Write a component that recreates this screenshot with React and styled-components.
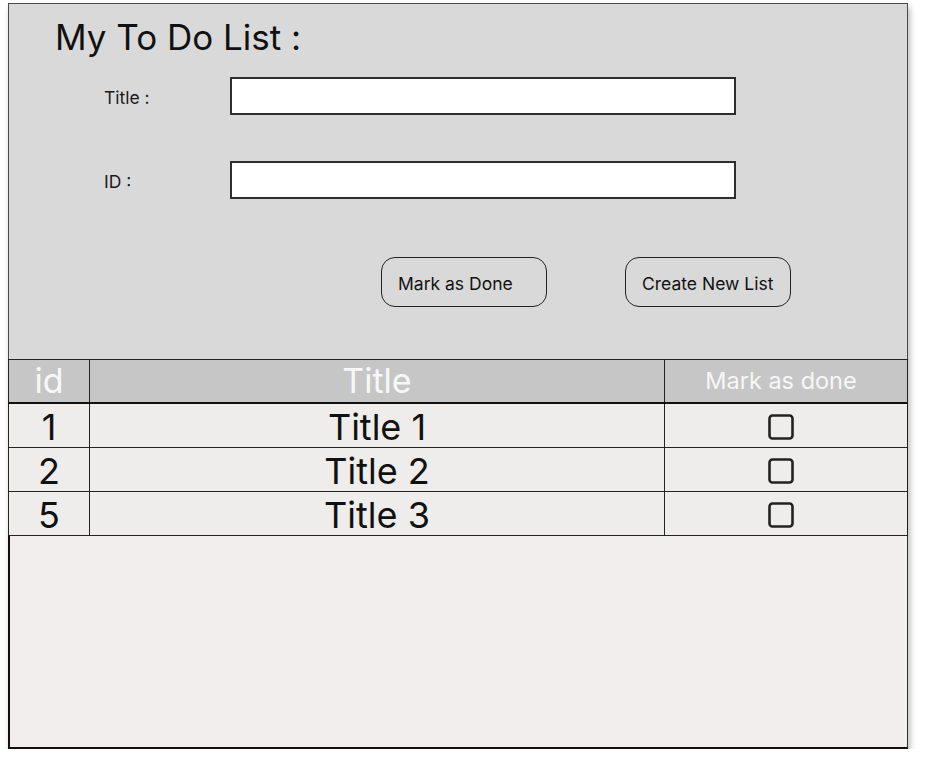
import React from 'react';
import styled, { createGlobalStyle } from 'styled-components';

const Global = createGlobalStyle`
  html, body { margin: 0; padding: 0; background: #ffffff; }
  body { font-family: Inter, "Noto Sans", sans-serif; color: #111; }
  * { box-sizing: border-box; }
`;

const Frame = styled.div`
  width: 900px;
  margin: 3px 0 0 8px;
  display: flex;
  flex-direction: column;
  box-shadow: 2px 4px 6px rgba(0, 0, 0, 0.28);
`;

const TopPanel = styled.section`
  height: 356px;
  background: #d9d9d9;
  border: 1px solid #4a4a4a;
  border-bottom: none;
  padding: 12px 0 0 46px;
`;

const Heading = styled.h1`
  margin: 0;
  font-size: 35px;
  font-weight: 400;
  line-height: 42px;
  color: #111;
`;

const Form = styled.div`
  margin: 19px 0 0 49px;
  display: grid;
  grid-template-columns: 126px 506px;
  row-gap: 46px;
  align-items: center;
`;

const Label = styled.label`
  font-size: 17.5px;
  color: #1a1a1a;
  padding-top: 3px;
`;

const Input = styled.input`
  height: 38px;
  width: 100%;
  border: 2px solid #2e2e2e;
  background: #ffffff;
  outline: none;
  padding: 0 8px;
  font-family: inherit;
`;

const Actions = styled.div`
  margin: 58px 0 0 326px;
  display: flex;
  gap: 78px;
`;

const Button = styled.button`
  width: 166px;
  height: 50px;
  border: 1.5px solid #222;
  border-radius: 14px;
  background: transparent;
  font-family: inherit;
  font-size: 17.5px;
  color: #111;
  text-align: left;
  padding: 2px 0 0 16px;
`;

const Row = styled.div`
  display: grid;
  grid-template-columns: 81px 575px 1fr;
  height: ${p => p.$header ? '45px' : '44px'};
  background: ${p => p.$header ? '#c6c6c6' : '#eeedeb'};
  border-left: 1px solid #222;
  border-right: 1px solid #222;
  border-top: ${p => p.$header ? '1px solid #222' : 'none'};
  border-bottom: ${p => p.$header ? '2px solid #111' : '1px solid #222'};
`;

const Cell = styled.div`
  display: flex;
  align-items: center;
  justify-content: center;
  border-right: ${p => p.$last ? 'none' : '1px solid #222'};
  font-size: ${p => p.$size}px;
  color: ${p => p.$header ? '#f7f7f7' : '#111'};
  line-height: 1;
  padding-top: ${p => p.$header ? '0' : '2px'};
  padding-right: ${p => p.$last ? '10px' : '0'};
`;

const Filler = styled.div`
  height: 213px;
  background: #f1eeed;
  border-left: 2px solid #111;
  border-right: 1px solid #333;
  border-bottom: 2px solid #111;
`;

const Check = () => (
  <svg width="26" height="26" viewBox="0 0 26 26">
    <rect x="1.5" y="1.5" width="23" height="23" rx="3" fill="none" stroke="#222" strokeWidth="2.6" />
  </svg>
);

const items = [
  { id: 1, title: 'Title 1' },
  { id: 2, title: 'Title 2' },
  { id: 5, title: 'Title 3' },
];

export default function App() {
  return (
    <>
      <Global />
      <Frame>
        <TopPanel>
          <Heading>My To Do List :</Heading>
          <Form>
            <Label>Title :</Label>
            <Input />
            <Label>ID :</Label>
            <Input />
          </Form>
          <Actions>
            <Button>Mark as Done</Button>
            <Button>Create New List</Button>
          </Actions>
        </TopPanel>
        <Row $header>
          <Cell $header $size={34}>id</Cell>
          <Cell $header $size={34}>Title</Cell>
          <Cell $header $last $size={23.5}>Mark as done</Cell>
        </Row>
        {items.map(it => (
          <Row key={it.id}>
            <Cell $size={36}>{it.id}</Cell>
            <Cell $size={36}>{it.title}</Cell>
            <Cell $last><Check /></Cell>
          </Row>
        ))}
        <Filler />
      </Frame>
    </>
  );
}
